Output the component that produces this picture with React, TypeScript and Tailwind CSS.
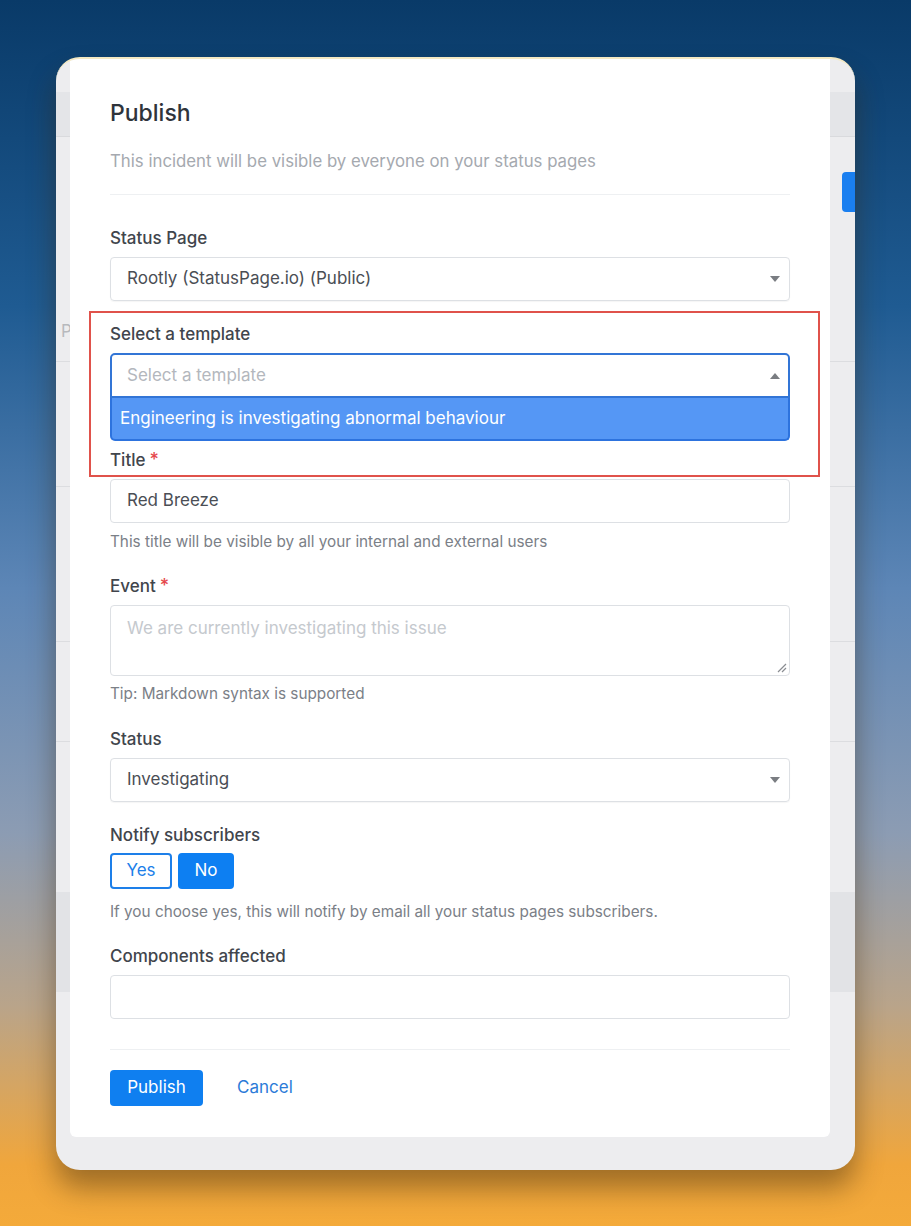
import React from "react";

const font = { fontFamily: "Inter, 'Noto Sans', sans-serif" };

function Caret({ up = false }: { up?: boolean }) {
  return (
    <svg width="10" height="6" viewBox="0 0 10 6" className="shrink-0">
      {up ? (
        <path d="M0 6 L5 0 L10 6 Z" fill="#7a7d82" />
      ) : (
        <path d="M0 0 L10 0 L5 6 Z" fill="#7a7d82" />
      )}
    </svg>
  );
}

function Label({ text, required }: { text: string; required?: boolean }) {
  return (
    <div className="text-[17px] font-medium text-[#41454c] leading-6 flex items-center gap-1">
      {text}
      {required && <span className="text-[#e5484d] text-[18px] leading-none">*</span>}
    </div>
  );
}

function Help({ text, mt = "mt-[9px]" }: { text: string; mt?: string }) {
  return <div className={`text-[15.3px] text-[#7b8087] leading-5 ${mt}`}>{text}</div>;
}

function SelectBox({ value }: { value: string }) {
  return (
    <div className="h-[44px] mt-[7px] border border-[#dde0e4] rounded-[4px] flex items-center justify-between pl-[16px] pr-[9px] shadow-[0_1px_1px_rgba(0,0,0,0.04)]">
      <span className="text-[17px] text-[#4a4e55]">{value}</span>
      <Caret />
    </div>
  );
}

export default function App() {
  return (
    <div
      style={font}
      className="w-full min-h-[1226px] pt-[57px] pl-[56px] bg-[linear-gradient(180deg,#093a68_0%,#1f5b92_25%,#5d86b6_48%,#8c9cb3_68%,#b9a48a_82%,#f0a63c_95%,#f4aa3a_100%)]"
    >
      <div className="relative w-[799px] h-[1113px] rounded-[24px] bg-[#ededef] overflow-hidden border-t-2 border-[#f4e9c3] shadow-[0_18px_28px_rgba(60,40,10,0.45)]">
        {/* faded page behind the dialog */}
        <div className="absolute inset-0 flex flex-col">
          <div className="h-[33px]" />
          <div className="h-[45px] bg-[#e4e5e8] border-b border-[#d9dadd]" />
          <div className="h-[225px] border-b border-[#dcdde0] relative">
            <div className="absolute right-0 top-[35px] w-[13px] h-[40px] bg-[#1a7ff0] rounded-l-[4px]" />
            <div className="absolute left-[5px] top-[182px] text-[17px] text-[#b7b9bd]">P</div>
          </div>
          <div className="h-[125px] border-b border-[#dcdde0]" />
          <div className="h-[155px] border-b border-[#dcdde0]" />
          <div className="h-[100px] border-b border-[#dcdde0]" />
          <div className="h-[150px]" />
          <div className="h-[100px] bg-[#e2e3e6]" />
        </div>

        <div className="relative ml-[14px] mr-[25px] h-[1078px] bg-white rounded-b-[6px] px-[40px] pt-[38px]">
          <h1 className="text-[23px] font-medium text-[#2f343b] leading-8">Publish</h1>
          <p className="mt-[20px] text-[16.8px] text-[#a5a9af] leading-6">
            This incident will be visible by everyone on your status pages
          </p>
          <div className="mt-[21px] h-px bg-[#eef0f2]" />

          <div className="mt-[31px]">
            <Label text="Status Page" />
            <SelectBox value="Rootly (StatusPage.io) (Public)" />
          </div>

          <div className="mt-[21px]">
            <Label text="Select a template" />
            <div className="mt-[7px] h-[45px] border-2 border-[#3275d6] rounded-t-[5px] flex items-center justify-between pl-[15px] pr-[8px]">
              <span className="text-[17px] text-[#b3b7bd]">Select a template</span>
              <Caret up />
            </div>
            <div className="h-[43px] bg-[#5597f5] border-2 border-t-0 border-[#2d73de] rounded-b-[5px] flex items-center px-[8px]">
              <span className="text-[17px] text-white">Engineering is investigating abnormal behaviour</span>
            </div>
          </div>

          <div className="mt-[7px]">
            <Label text="Title" required />
            <div className="h-[44px] mt-[7px] border border-[#dde0e4] rounded-[4px] flex items-center pl-[16px]">
              <span className="text-[17px] text-[#4a4e55]">Red Breeze</span>
            </div>
            <Help text="This title will be visible by all your internal and external users" />
          </div>

          <div className="mt-[22px]">
            <Label text="Event" required />
            <div className="relative h-[71px] mt-[7px] border border-[#dde0e4] rounded-[4px] pl-[16px] pt-[10px]">
              <span className="text-[17px] text-[#c5c9ce]">We are currently investigating this issue</span>
              <svg className="absolute right-[2px] bottom-[2px]" width="10" height="10" viewBox="0 0 10 10">
                <path d="M9 1 L1 9 M9 5 L5 9" stroke="#8a8d92" strokeWidth="1.2" />
              </svg>
            </div>
            <Help text="Tip: Markdown syntax is supported" mt="mt-[8px]" />
          </div>

          <div className="mt-[23px]">
            <Label text="Status" />
            <SelectBox value="Investigating" />
          </div>

          <div className="mt-[21px]">
            <Label text="Notify subscribers" />
            <div className="mt-[6px] flex gap-[6px]">
              <button className="w-[62px] h-[36px] border-2 border-[#1d7fe9] rounded-[4px] text-[17px] text-[#1d7fe9] bg-white">
                Yes
              </button>
              <button className="w-[56px] h-[36px] rounded-[4px] text-[17px] text-white bg-[#0d7ff2]">No</button>
            </div>
            <Help
              text="If you choose yes, this will notify by email all your status pages subscribers."
              mt="mt-[13px]"
            />
          </div>

          <div className="mt-[22px]">
            <Label text="Components affected" />
            <div className="h-[44px] mt-[7px] border border-[#dde0e4] rounded-[4px]" />
          </div>

          <div className="mt-[30px] h-px bg-[#eef0f2]" />
          <div className="mt-[20px] flex items-center gap-[34px]">
            <button className="w-[93px] h-[36px] rounded-[4px] bg-[#0f7ff0] text-white text-[17px]">Publish</button>
            <span className="text-[17px] text-[#2b7bd8]">Cancel</span>
          </div>

          {/* annotation highlight */}
          <div className="absolute left-[19px] top-[252px] w-[731px] h-[166px] border-2 border-[#e0524b] pointer-events-none" />
        </div>
      </div>
    </div>
  );
}
